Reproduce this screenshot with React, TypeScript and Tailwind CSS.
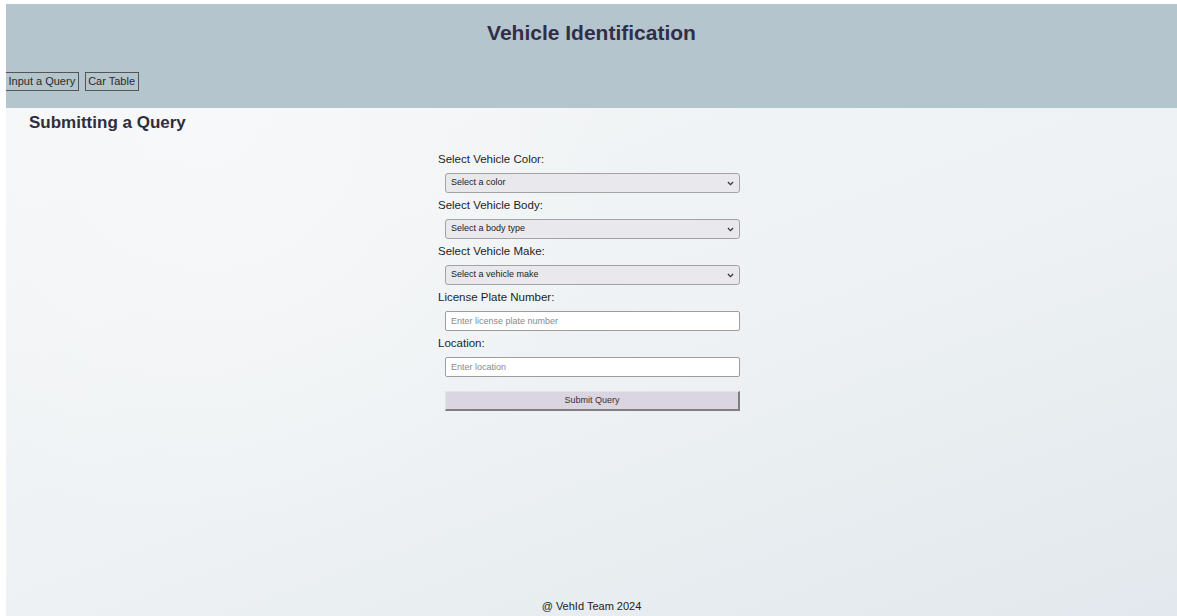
import React from 'react';

// select options for the query form
const colorOptions = ['Black', 'White', 'Silver', 'Gray', 'Red', 'Blue', 'Green'];
const bodyOptions = ['Sedan', 'SUV', 'Truck', 'Coupe', 'Hatchback', 'Van'];
const makeOptions = ['Toyota', 'Honda', 'Ford', 'Chevrolet', 'Nissan', 'BMW'];

function Chevron() {
  return (
    <svg
      className="pointer-events-none absolute right-[6px] top-[8px]"
      width="7"
      height="5"
      viewBox="0 0 7 5"
      fill="none"
    >
      <path d="M0.9 1 L3.5 3.6 L6.1 1" stroke="#3a3a3a" strokeWidth="1.3" />
    </svg>
  );
}

function SelectField({ label, placeholder, options }: { label: string; placeholder: string; options: string[] }) {
  return (
    <div className="flex flex-col">
      <label className="block text-[11.5px] leading-[14px] text-[#1e1e1e] mb-[7px]">{label}</label>
      <div className="relative ml-[7px] w-[295px] h-[20px] mb-[5px]">
        <select
          defaultValue=""
          className="block appearance-none w-full h-[20px] rounded-[3px] border border-[#a3a3a3] bg-[#e9e8ed] pl-[5px] text-[9px] text-[#222] outline-none"
        >
          <option value="" disabled>
            {placeholder}
          </option>
          {options.map((o) => (
            <option key={o} value={o}>
              {o}
            </option>
          ))}
        </select>
        <Chevron />
      </div>
    </div>
  );
}

function TextField({ label, placeholder }: { label: string; placeholder: string }) {
  return (
    <div className="flex flex-col">
      <label className="block text-[11.5px] leading-[14px] text-[#1e1e1e] mb-[7px]">{label}</label>
      <input
        type="text"
        placeholder={placeholder}
        className="block ml-[7px] w-[295px] h-[20px] mb-[5px] rounded-[2px] border border-[#9d9d9d] bg-white pl-[5px] text-[9px] text-[#222] placeholder:text-[#8a8a8a] outline-none"
      />
    </div>
  );
}

export default function App() {
  return (
    <div className="min-h-screen bg-white pl-[6px] pt-[4px] font-['Liberation_Sans',Arial,sans-serif]">
      <div className="flex h-[612px] flex-col overflow-hidden bg-[radial-gradient(circle_at_200px_110px,#f7f8f9_0px,transparent_420px),linear-gradient(160deg,#f5f6f7_0%,#eef2f4_55%,#e2e8ed_100%)]">
        {/* 상단 헤더 */}
        <header className="h-[104px] shrink-0 bg-[#b4c5ce] flex flex-col">
          <h1 className="mt-[17px] text-center text-[21px] leading-[24px] font-bold text-[#312e48]">
            Vehicle Identification
          </h1>
          <nav className="mt-[27px] ml-[-1px] flex gap-[6px]">
            <button className="h-[19px] border border-[#555] px-[2.5px] text-[11px] leading-[17px] text-[#2a2a2a]">
              Input a Query
            </button>
            <button className="h-[19px] border border-[#555] px-[2.5px] text-[11px] leading-[17px] text-[#2a2a2a]">
              Car Table
            </button>
          </nav>
        </header>

        <main className="flex-1 flex flex-col">
          <h2 className="pl-[23px] pt-[5px] text-[17px] leading-[19px] font-bold text-[#2e2d3e]">
            Submitting a Query
          </h2>

          {/* 조회 폼 */}
          <form className="mx-auto mt-[20px] w-[307px] flex flex-col" onSubmit={(e) => e.preventDefault()}>
            <SelectField label="Select Vehicle Color:" placeholder="Select a color" options={colorOptions} />
            <SelectField label="Select Vehicle Body:" placeholder="Select a body type" options={bodyOptions} />
            <SelectField label="Select Vehicle Make:" placeholder="Select a vehicle make" options={makeOptions} />
            <TextField label="License Plate Number:" placeholder="Enter license plate number" />
            <TextField label="Location:" placeholder="Enter location" />
            <button
              type="submit"
              className="ml-[7px] mt-[9px] w-[295px] h-[20px] border-t border-l border-[#e4e4e4] border-r-2 border-b-2 border-r-[#7f7f7f] border-b-[#7f7f7f] bg-[#dbd5e1] text-[9px] text-[#333]"
            >
              Submit Query
            </button>
          </form>
        </main>

        <footer className="pb-[3px] text-center text-[11px] leading-[14px] text-[#222]">@ VehId Team 2024</footer>
      </div>
    </div>
  );
}
